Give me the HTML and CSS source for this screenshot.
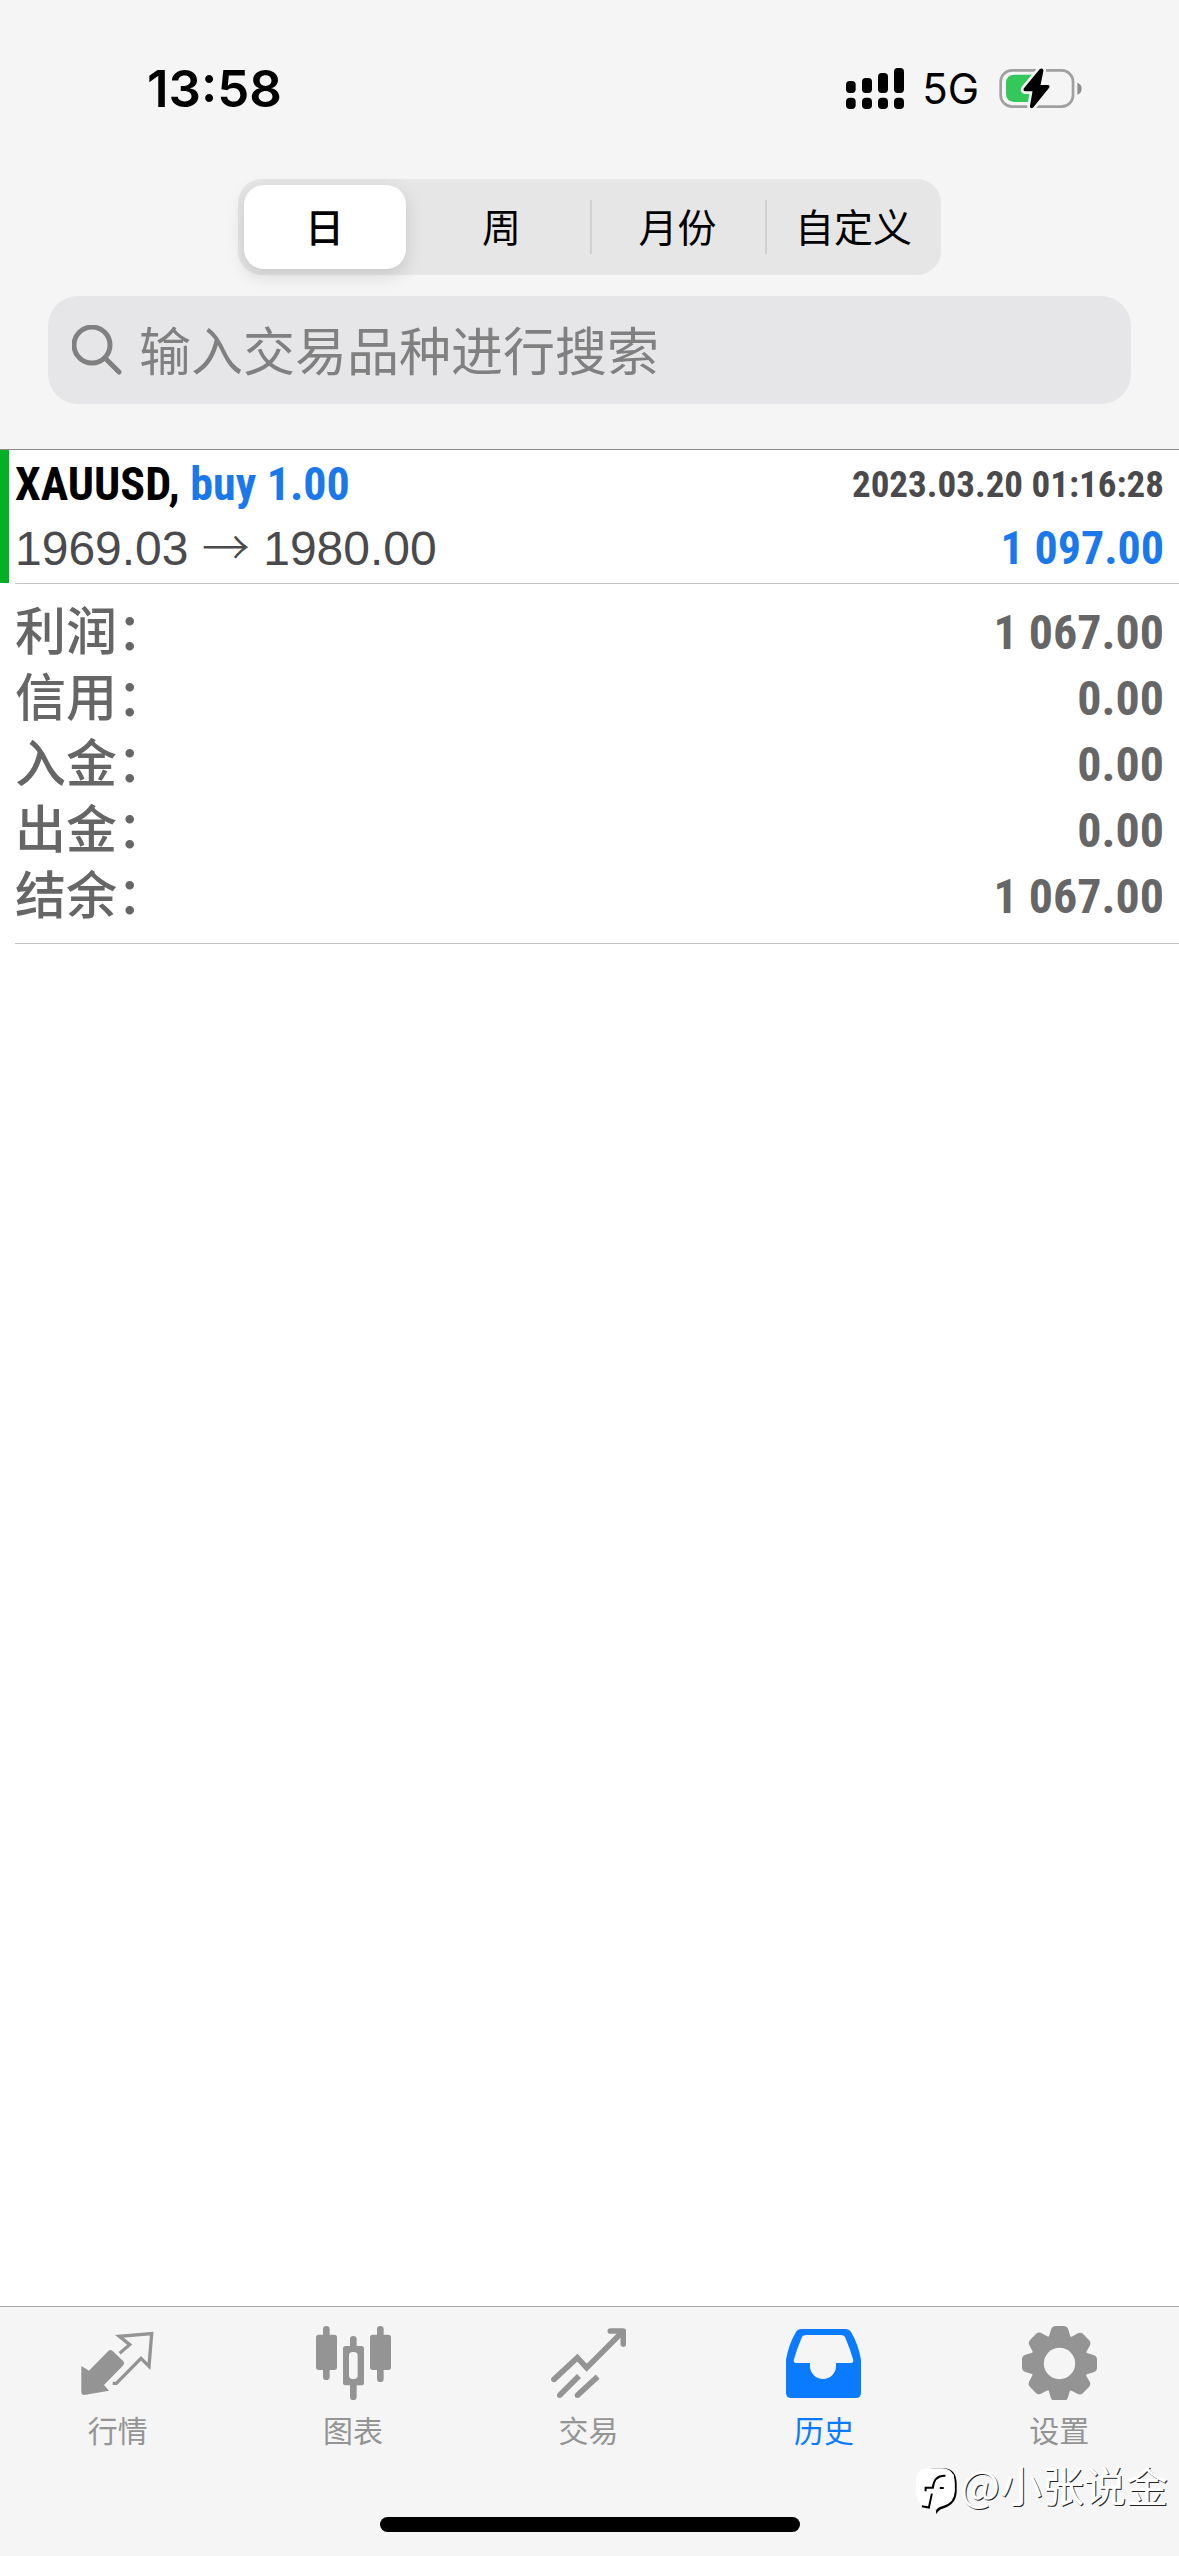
FILE: index.html
```html
<!DOCTYPE html>
<html lang="zh-CN">
<head>
<meta charset="utf-8">
<meta name="viewport" content="width=device-width, initial-scale=1">
<title>历史</title>
<link rel="stylesheet" href="styles.css">
</head>
<body>
<div class="app">
  <header class="top">
    <div class="status">
      <time class="clock">13:58</time>
      <div class="indicators">
        <svg class="signal" viewBox="0 0 174 123" aria-hidden="true">
          <rect x="0" y="39" width="29" height="36" rx="11"/>
          <rect x="48" y="30" width="30" height="45" rx="11"/>
          <rect x="96" y="15" width="30" height="60" rx="11"/>
          <rect x="144" y="0" width="30" height="75" rx="11"/>
          <rect x="0" y="89" width="29" height="34" rx="12"/>
          <rect x="48" y="89" width="30" height="34" rx="12"/>
          <rect x="96" y="89" width="30" height="34" rx="12"/>
          <rect x="144" y="89" width="30" height="34" rx="12"/>
        </svg>
        <span class="network">5G</span>
        <svg class="battery" viewBox="535 78 250 129" aria-hidden="true">
          <rect x="540" y="88" width="218" height="109" rx="34" fill="none" stroke="#a0a0a0" stroke-width="8"/>
          <path d="M771 125q13 5 13 18t-13 18z" fill="#8e8e8e"/>
          <path d="M582 101h66v82h-66q-26 0-26-26v-30q0-26 26-26z" fill="#34c759"/>
          <path d="M658 84L610 142Q606 150 614 151H636L628 197Q630 205 638 200L686 140Q690 133 682 132H660L669 88Q667 79 658 84Z" fill="#000" stroke="#f5f5f5" stroke-width="16" paint-order="stroke"/>
        </svg>
      </div>
    </div>
    <div class="segments" role="group" aria-label="时间范围">
      <button class="segment active" type="button" aria-pressed="true">日</button>
      <button class="segment" type="button">周</button>
      <button class="segment divided" type="button">月份</button>
      <button class="segment divided" type="button">自定义</button>
    </div>
    <label class="search">
      <svg class="search-icon" viewBox="0 0 50 50" aria-hidden="true">
        <circle cx="20" cy="20" r="18"/>
        <path d="M33 33L47 47"/>
      </svg>
      <input class="search-input" type="search" placeholder="输入交易品种进行搜索" aria-label="输入交易品种进行搜索">
    </label>
  </header>

  <main class="history">
    <article class="deal">
      <div class="line">
        <strong class="symbol">XAUUSD, <span class="blue">buy 1.00</span></strong>
        <time class="stamp">2023.03.20 01:16:28</time>
      </div>
      <div class="line">
        <span class="prices">1969.03 <span class="arrow">→</span> 1980.00</span>
        <strong class="blue">1 097.00</strong>
      </div>
    </article>
    <table class="summary">
      <tr><th scope="row">利润：</th><td>1 067.00</td></tr>
      <tr><th scope="row">信用：</th><td>0.00</td></tr>
      <tr><th scope="row">入金：</th><td>0.00</td></tr>
      <tr><th scope="row">出金：</th><td>0.00</td></tr>
      <tr><th scope="row">结余：</th><td>1 067.00</td></tr>
    </table>
  </main>

  <footer class="bottom">
    <nav class="tabs">
      <a class="tab" href="#quotes">
        <svg class="tab-icon" viewBox="119 105 225 225" aria-hidden="true">
          <path d="M123 228L146 242L204 183Q210 177 217 183L249 214Q254 220 249 226L191 285L206 302L132 315Q123 315 123 306Z" fill="currentColor"/>
          <path d="M238 190L268 164L237 139L334 131L326 229L302 205L228 280H217" fill="none" stroke="currentColor" stroke-width="10"/>
        </svg>
        行情
      </a>
      <a class="tab" href="#charts">
        <svg class="tab-icon" viewBox="825 105 225 225" aria-hidden="true">
          <g fill="currentColor">
            <rect x="846" y="108" width="20" height="162" rx="10"/>
            <rect x="825" y="134" width="63" height="106" rx="8"/>
            <rect x="1008" y="108" width="20" height="168" rx="10"/>
            <rect x="987" y="134" width="63" height="106" rx="8"/>
            <rect x="927" y="138" width="20" height="192" rx="10"/>
            <rect x="906" y="168" width="63" height="118" rx="8"/>
          </g>
          <rect x="924" y="186" width="26" height="81" rx="11" fill="#f5f5f5"/>
        </svg>
        图表
      </a>
      <a class="tab" href="#trade">
        <svg class="tab-icon" viewBox="92 105 225 225" aria-hidden="true">
          <g fill="none" stroke="currentColor" stroke-width="17">
            <path d="M101 268L171 203L199 233L306 126" stroke-linecap="round"/>
            <path d="M270 123H309V162" stroke-linecap="round" stroke-linejoin="round"/>
            <path d="M118 316L176 258M171 316L232 260"/>
          </g>
          <g fill="currentColor"><circle cx="118" cy="316" r="8"/><circle cx="171" cy="316" r="8"/></g>
        </svg>
        交易
      </a>
      <a class="tab current" href="#history" aria-current="page">
        <svg class="tab-icon" viewBox="798 105 225 225" aria-hidden="true">
          <path fill="currentColor" fill-rule="evenodd" d="M845 117H976Q988 117 993 126Q1014 160 1023 209V308Q1023 324 1007 324H814Q798 324 798 308V209Q807 160 828 126Q833 117 845 117ZM859 135Q848 135 845 143Q830 178 821 211Q821 219 828 219H870V228A38 38 0 0 0 948 228V219H993Q1000 219 1000 211Q991 178 976 143Q973 135 962 135Z"/>
        </svg>
        历史
      </a>
      <a class="tab" href="#settings">
        <svg class="tab-icon" viewBox="426 105 225 225" aria-hidden="true">
          <defs>
            <path id="tooth" d="M502 146Q508 140 511 126Q514 108 526 108H552Q564 108 567 126Q570 140 576 146L580 180H498Z"/>
          </defs>
          <g fill="currentColor">
            <use href="#tooth"/>
            <use href="#tooth" transform="rotate(45 538.500 220.500)"/>
            <use href="#tooth" transform="rotate(90 538.500 220.500)"/>
            <use href="#tooth" transform="rotate(135 538.500 220.500)"/>
            <use href="#tooth" transform="rotate(180 538.500 220.500)"/>
            <use href="#tooth" transform="rotate(225 538.500 220.500)"/>
            <use href="#tooth" transform="rotate(270 538.500 220.500)"/>
            <use href="#tooth" transform="rotate(315 538.500 220.500)"/>
            <circle cx="538.500" cy="220.500" r="84"/>
          </g>
          <circle cx="538.500" cy="220.500" r="47" fill="#f5f5f5"/>
        </svg>
        设置
      </a>
    </nav>
    <div class="home-bar"></div>
    <div class="watermark">
      <svg class="watermark-logo" viewBox="105 535 130 150" aria-hidden="true">
        <path d="M150 541H190Q231 541 231 590V610Q231 650 190 663Q176 666 170 680L167 662Q172 655 190 652Q225 640 225 600L222 560Z" fill="#000"/>
        <path d="M145 541H185Q225 541 225 585V610Q225 645 190 655Q172 658 168 670L160 650L148 662Q108 650 108 610V580Q108 541 145 541Z" fill="#fff"/>
        <path d="M197 564Q163 562 159 600H137V611M156 618L147 660L126 656" fill="none" stroke="#000" stroke-width="6"/>
        <rect x="180" y="598" width="12" height="6"/>
      </svg>
      <span>@小张说金</span>
    </div>
  </footer>
</div>
</body>
</html>
```
FILE: styles.css
```css
* {
  box-sizing: border-box;
}

body {
  margin: 0;
  background: #fff;
  color: #000;
  font-family: "Liberation Sans", "Noto Sans CJK SC", sans-serif;
}

.app {
  display: flex;
  flex-direction: column;
  min-height: 100vh;
}

/* Header */
.top {
  padding: 56px 48px 45px;
  background: #f5f5f5;
  border-bottom: 1px solid #8c8c8c;
}

.status {
  display: flex;
  align-items: center;
  justify-content: space-between;
  height: 64px;
  padding: 0 49px 0 99px;
  font-family: Inter, sans-serif;
}

.clock {
  font-size: 51px;
  font-weight: 600;
}

.indicators {
  display: flex;
  align-items: center;
}

.signal {
  width: 58px;
  height: 41px;
}

.network {
  margin: 0 20px 0 18px;
  font-size: 42px;
}

.battery {
  width: 83px;
  height: 43px;
}

.segments {
  display: grid;
  grid-template-columns: repeat(4, 1fr);
  width: 65%;
  height: 96px;
  margin: 59px auto 21px;
  padding: 6px 0;
  border-radius: 24px;
  background: #e6e6e6;
}

.segment {
  position: relative;
  padding: 0 0 4px;
  border: 0;
  border-radius: 20px;
  background: none;
  color: #000;
  font-family: "Liberation Sans", "Noto Sans CJK SC", sans-serif;
  font-size: 39px;
}

.segment.active {
  margin: 0 8px 0 6px;
  background: #fff;
  box-shadow: 0 6px 18px rgba(0, 0, 0, 0.14);
  font-weight: 500;
}

.segment.divided::before {
  content: "";
  position: absolute;
  top: 15px;
  bottom: 15px;
  left: 0;
  width: 2px;
  background: #d0d0d2;
}

.search {
  display: flex;
  align-items: center;
  gap: 17px;
  height: 108px;
  padding: 0 24px;
  border-radius: 30px;
  background: #e6e6e8;
}

.search-icon {
  width: 50px;
  height: 50px;
  fill: none;
  stroke: #808080;
  stroke-width: 5;
  stroke-linecap: round;
}

.search-input {
  flex: 1;
  min-width: 0;
  height: 80px;
  padding: 0 0 4px;
  border: 0;
  outline: 0;
  background: none;
  font-family: "Noto Sans CJK SC", sans-serif;
  font-size: 52px;
}

.search-input::placeholder {
  color: #808080;
  opacity: 1;
}

/* Deal */
.deal {
  position: relative;
  padding: 2px 15px 3px;
  font-size: 48px;
}

.deal::before {
  content: "";
  position: absolute;
  top: 0;
  bottom: 0;
  left: 0;
  width: 9px;
  background: #06b025;
}

.line {
  display: flex;
  align-items: center;
  justify-content: space-between;
  height: 64px;
}

.line strong,
.stamp,
.summary td {
  font-family: "Roboto Condensed", "Liberation Sans Narrow", sans-serif;
  font-weight: 700;
}

.line strong {
  font-size: 46px;
}

.line .blue {
  color: #1a78ea;
}

.line .stamp {
  color: #4a4a4c;
  font-size: 37px;
}

.prices {
  color: #4a4a4c;
}

.arrow {
  font-family: "Noto Sans CJK SC", sans-serif;
  font-weight: 300;
  line-height: 1;
}

/* Account totals */
.summary {
  width: calc(100% - 15px);
  margin-left: 15px;
  border-collapse: separate;
  border-spacing: 0;
  border-top: 1px solid #c4c4c4;
  border-bottom: 1px solid #c4c4c4;
  padding: 16px 15px 13px 0;
  color: #666;
}

.summary th,
.summary td {
  height: 66px;
  padding: 0;
  line-height: 66px;
}

.summary th {
  font-family: "Liberation Sans", "Noto Sans CJK SC", sans-serif;
  font-size: 51px;
  font-weight: 500;
  text-align: left;
}

.summary td {
  font-size: 48px;
  text-align: right;
}

/* Tab bar */
.bottom {
  position: relative;
  margin-top: auto;
  padding: 18px 0 24px;
  border-top: 1px solid #a8a8a8;
  background: #f5f5f5;
}

.tabs {
  display: grid;
  grid-template-columns: repeat(5, 1fr);
  padding-right: 2px;
}

.tab {
  display: flex;
  flex-direction: column;
  align-items: center;
  gap: 12px;
  color: #949494;
  font-size: 30px;
  line-height: 40px;
  text-decoration: none;
}

.tab.current {
  color: #0a7aff;
}

.tab-icon {
  width: 75px;
  height: 75px;
}

.home-bar {
  width: 420px;
  height: 15px;
  margin: 65px auto 0;
  border-radius: 8px;
  background: #000;
}

.watermark {
  position: absolute;
  right: 11px;
  bottom: 40px;
  display: flex;
  align-items: center;
  gap: 2px;
  color: #fff;
  font-family: "Noto Sans CJK SC", sans-serif;
  font-size: 42px;
  line-height: 60px;
  text-shadow: 1px 1px 0 #222;
}

.watermark-logo {
  width: 43px;
  height: 50px;
  margin-top: 14px;
}
```
